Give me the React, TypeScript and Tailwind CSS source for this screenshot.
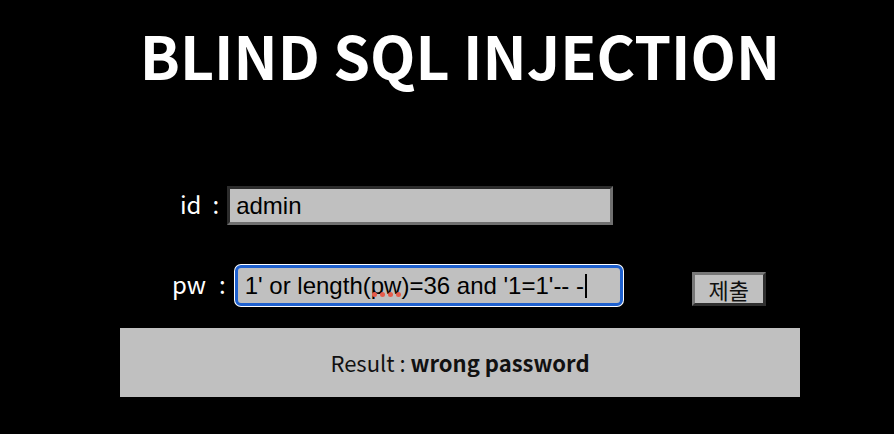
import React from "react";

const cjk = { fontFamily: '"Noto Sans CJK KR", "Noto Sans", sans-serif' };
const arial = { fontFamily: '"Liberation Sans", Arial, sans-serif' };

export default function App() {
  return (
    <div className="w-[894px] h-[434px] bg-black overflow-hidden">
      <div className="ml-[120px] w-[680px] flex flex-col">
        <h1
          className="mt-[25px] h-[60px] text-center text-white font-bold text-[59px] leading-[60px]"
          style={cjk}
        >
          BLIND SQL INJECTION
        </h1>

        {/* id row */}
        <div className="mt-[101px] flex items-baseline">
          <span className="ml-[60px] text-white text-[24px] leading-[24px]" style={cjk}>
            id
          </span>
          <span className="ml-[11px] text-white text-[24px] leading-[24px]" style={cjk}>
            :
          </span>
          <div
            className="ml-[8px] w-[386px] h-[39px] flex items-center bg-[#c0c0c0] border-[3px] border-t-[#2c2c2c] border-l-[#2c2c2c] border-b-[#707070] border-r-[#707070] pl-[6px] text-[24px] text-black"
            style={arial}
          >
            admin
          </div>
        </div>

        {/* pw row */}
        <div className="mt-[40px] flex items-baseline">
          <span className="ml-[52px] text-white text-[24px] leading-[24px]" style={cjk}>
            pw
          </span>
          <span className="ml-[13px] text-white text-[24px] leading-[24px]" style={cjk}>
            :
          </span>
          <div
            className="ml-[9px] w-[388px] h-[41px] flex items-center bg-[#c0c0c0] border-[3px] border-[#1f61cf] rounded-[6px] shadow-[0_0_0_1px_#ffffff] pl-[7px] text-[24px] text-black whitespace-pre"
            style={arial}
          >
            <span>1' or length(</span>
            <span className="relative">
              pw
              <span className="absolute left-[1px] top-[24px] flex gap-[3px]">
                <span className="w-[5px] h-[5px] rounded-full bg-[#e65c4c]" />
                <span className="w-[5px] h-[5px] rounded-full bg-[#e65c4c]" />
                <span className="w-[5px] h-[5px] rounded-full bg-[#e65c4c]" />
                <span className="w-[5px] h-[5px] rounded-full bg-[#e65c4c]" />
              </span>
            </span>
            <span>)=36 and '1=1'-- -</span>
            <span className="ml-[1px] w-[2px] h-[24px] bg-black" />
          </div>
          <div
            className="self-end ml-[69px] w-[74px] h-[34px] flex items-center justify-center bg-[#c0c0c0] border-[3px] border-t-[#777777] border-l-[#777777] border-b-[#2f2f2f] border-r-[#2f2f2f] text-[22px] text-[#111]"
            style={cjk}
          >
            제출
          </div>
        </div>

        {/* result */}
        <div
          className="mt-[22px] h-[69px] bg-[#c0c0c0] flex items-center justify-center text-[22px] text-[#111]"
          style={cjk}
        >
          <span>Result :&nbsp;</span>
          <span className="font-bold">wrong password</span>
        </div>
      </div>
    </div>
  );
}
